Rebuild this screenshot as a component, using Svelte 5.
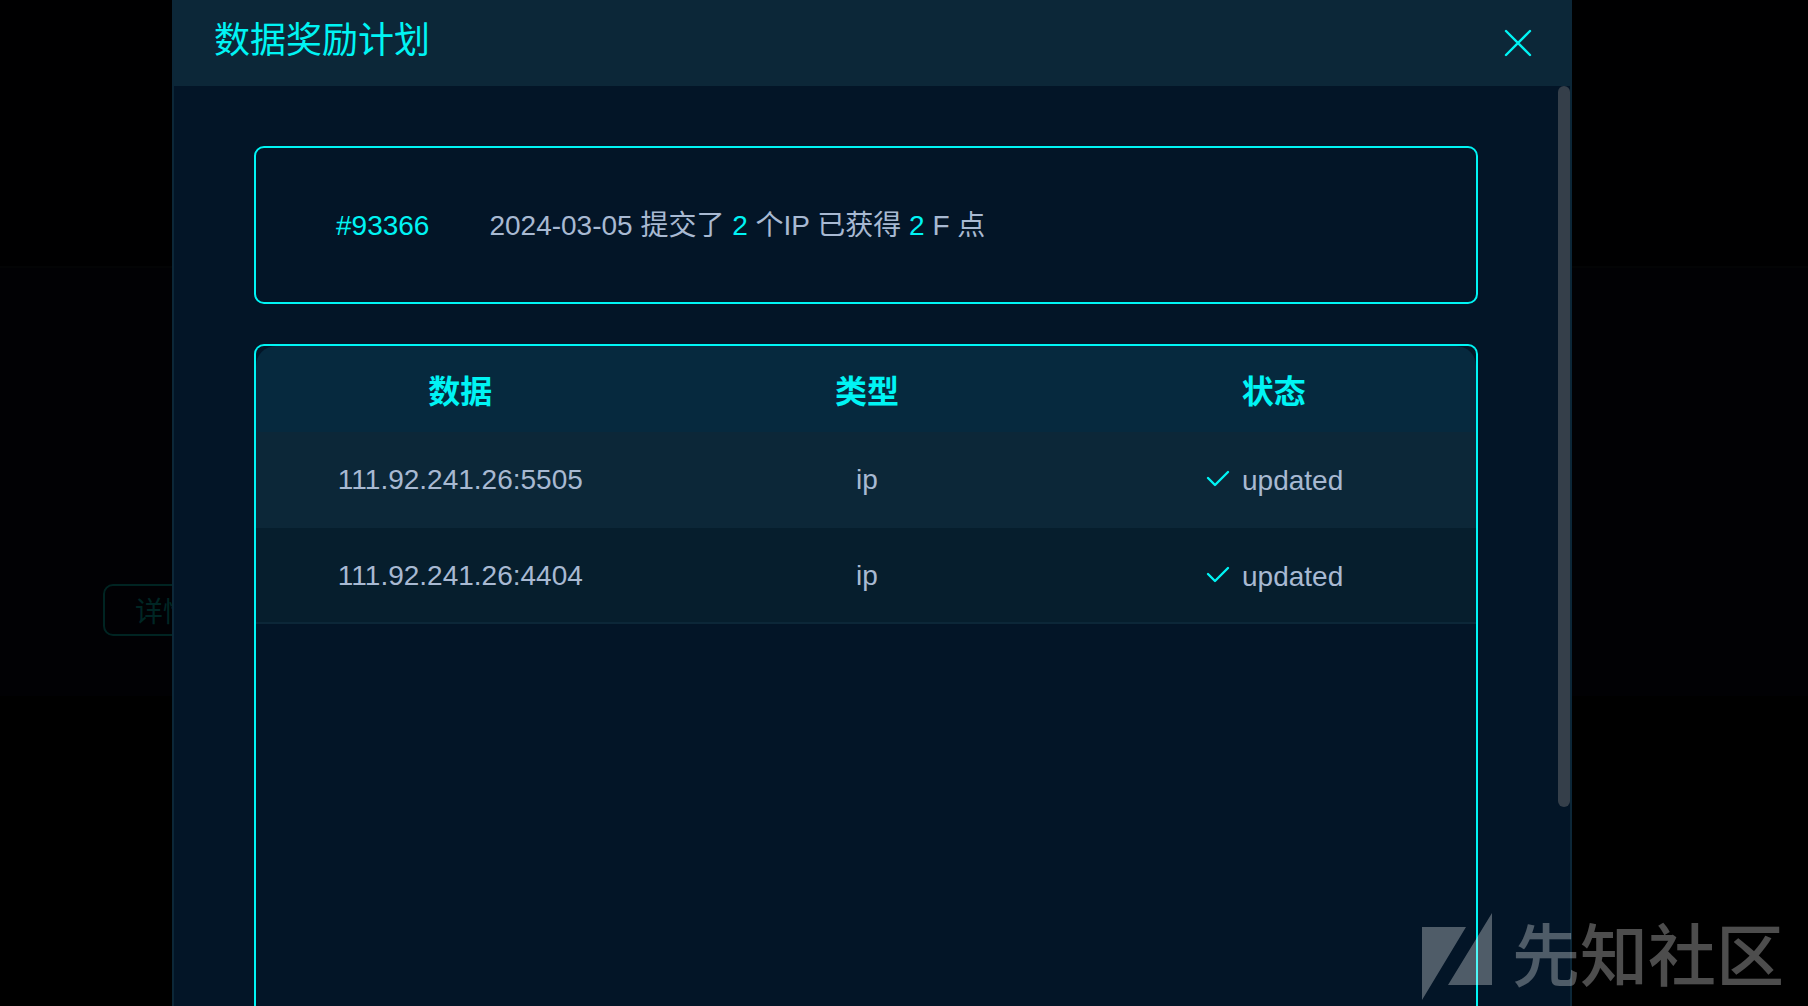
<script>
  const report = { id: '#93366', date: '2024-03-05', submitted: 2, points: 2 };
  const rows = [
    { value: '111.92.241.26:5505', type: 'ip', status: 'updated' },
    { value: '111.92.241.26:4404', type: 'ip', status: 'updated' }
  ];
  // share of the dialog content that is in view, in percent
  const visible = (920 / 1174) * 100;
</script>

<div class="page">
  <div class="backdrop">
    <div class="banner"></div>
    <div class="record">
      <button class="detail" type="button">详情</button>
    </div>
  </div>

  <div class="overlay">
    <div class="dialog" role="dialog" aria-labelledby="dialog-title">
      <header>
        <h1 id="dialog-title">数据奖励计划</h1>
        <button class="close" type="button" aria-label="关闭">
          <svg viewBox="0 0 28 28" width="28" height="28" aria-hidden="true">
            <path d="M2 2L26 26M26 2L2 26" />
          </svg>
        </button>
      </header>
      <div class="body">
        <div class="content">
          <section class="card summary">
            <span class="id">{report.id}</span>
            <p>{report.date} 提交了 <b>{report.submitted}</b> 个IP 已获得 <b>{report.points}</b> F 点</p>
          </section>
          <section class="card list">
            <table>
              <thead>
                <tr><th>数据</th><th>类型</th><th>状态</th></tr>
              </thead>
              <tbody>
                {#each rows as row}
                  <tr>
                    <td>{row.value}</td>
                    <td>{row.type}</td>
                    <td>
                      <span class="status">
                        <svg viewBox="0 0 24 18" width="24" height="18" aria-hidden="true">
                          <path d="M2 8L9 15L22 2" />
                        </svg>
                        {row.status}
                      </span>
                    </td>
                  </tr>
                {/each}
              </tbody>
            </table>
          </section>
        </div>
        <div class="track"><div class="thumb" style="height: {visible}%"></div></div>
      </div>
    </div>
  </div>

  <div class="watermark">
    <svg viewBox="0 0 70 87" width="70" height="87" aria-hidden="true">
      <path d="M0 14H44L0 87ZM70 0V72H26Z" />
    </svg>
    <span>先知社区</span>
  </div>
</div>

<style>
  :global(body) {
    margin: 0;
    background: #000;
  }
  .page {
    position: relative;
    height: 100vh;
    overflow: hidden;
    font-family: 'Liberation Sans', 'Noto Sans CJK SC', sans-serif;
    font-size: 28px;
    line-height: 40px;
    color: #a8b9d2;
  }
  .page * {
    box-sizing: border-box;
  }
  .backdrop {
    background: #000;
  }
  .banner {
    height: 268px;
    background: #000001;
    border-bottom: 2px solid #030405;
  }
  .record {
    height: 428px;
    padding: 316px 0 0 103px;
    background: #010104;
  }
  button {
    font: inherit;
    background: none;
    cursor: pointer;
  }
  .detail {
    display: block;
    height: 52px;
    padding: 6px 30px 0;
    border: 2px solid #002422;
    border-radius: 10px;
    color: #002624;
  }
  .overlay {
    position: absolute;
    inset: 0;
    display: grid;
    grid-template-columns: 43fr 350fr 59fr;
  }
  .dialog {
    grid-column: 2;
    display: flex;
    flex-direction: column;
    min-height: 0;
    border: solid #0c2738;
    border-width: 0 2px;
    background: #031527;
  }
  header {
    display: flex;
    align-items: center;
    justify-content: space-between;
    height: 86px;
    padding: 0 38px 0 40px;
    background: #0c2738;
    color: #00f4f4;
  }
  h1 {
    margin: 0;
    padding-bottom: 4px;
    font-size: 36px;
    font-weight: 400;
    line-height: 48px;
  }
  .close {
    display: flex;
    padding: 0;
    border: 0;
    color: inherit;
  }
  .close path,
  .status path {
    fill: none;
    stroke: #00f4f4;
    stroke-width: 2.4;
    stroke-linecap: round;
    stroke-linejoin: round;
  }
  .body {
    flex: 1;
    min-height: 0;
    display: flex;
  }
  .content {
    flex: 1;
    display: flex;
    flex-direction: column;
    gap: 40px;
    padding: 60px 80px 0;
  }
  .track {
    width: 12px;
  }
  .thumb {
    border-radius: 6px;
    background: #353f4a;
  }
  .card {
    border: 2px solid #00f4f4;
    border-radius: 10px;
  }
  .summary {
    display: flex;
    align-items: center;
    gap: 60px;
    padding: 58px 80px 56px;
  }
  .summary p {
    margin: 0;
  }
  .summary .id {
    color: #00f4f4;
  }
  .summary b {
    font-weight: 400;
    color: #00f4f4;
  }
  .list {
    flex: 1;
    border-bottom: 0;
    border-radius: 10px 10px 0 0;
  }
  table {
    width: 100%;
    table-layout: fixed;
    border-collapse: separate;
    border-spacing: 0;
    text-align: center;
  }
  th {
    height: 86px;
    padding: 6px 0 0 2px;
    background: #06293e;
    font-size: 32px;
    font-weight: 700;
    line-height: 48px;
    color: #00f4f4;
  }
  th:first-child {
    border-top-left-radius: 20px;
  }
  th:last-child {
    border-top-right-radius: 20px;
  }
  td {
    height: 96px;
    padding: 2px 0 0 2px;
    border-bottom: 2px solid #0c2738;
    background: #0c2738;
  }
  tr:nth-child(even) td {
    background: #061e2d;
  }
  .status {
    display: inline-flex;
    align-items: center;
    gap: 12px;
    padding: 2px 0 0 2px;
  }
  .status svg {
    margin-bottom: 4px;
  }
  .watermark {
    position: absolute;
    right: 24px;
    bottom: 6px;
    display: flex;
    align-items: flex-end;
    gap: 20px;
    font-size: 68px;
    font-weight: 500;
    line-height: 86px;
    color: #fff;
    opacity: 0.3;
  }
  .watermark path {
    fill: currentColor;
  }
</style>
